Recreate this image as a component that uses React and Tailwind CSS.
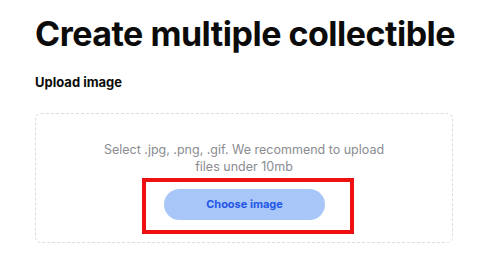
export default function App() {
  return (
    <div className="w-[481px] h-[259px] bg-white overflow-hidden px-[35px] pt-[14px]" style={{ fontFamily: "Inter, 'Noto Sans', sans-serif" }}>
      <h1 className="text-[34px] leading-[40px] font-bold text-[#0b0b0b] tracking-[-0.5px] whitespace-nowrap">Create multiple collectible</h1>
      <div className="mt-[20px] text-[13px] leading-[16px] font-bold text-[#0b0b0b]">Upload image</div>
      <div className="mt-[23px] h-[130px] w-[418px] border border-dashed border-[#dcdcdc] rounded-[6px] flex flex-col items-center pt-[27px]">
        <p className="text-[12.5px] leading-[17px] text-[#8a8c91] text-center w-[300px]">
          Select .jpg, .png, .gif. We recommend to upload<br />files under 10mb
        </p>
        <div className="mt-[3px] ml-[8px] border-4 border-[#ee1111] pl-[18px] pr-[25px] pt-[7px] pb-[10px]">
          <button className="w-[161px] h-[31px] rounded-full bg-[#a8c6f8] text-[#2356e8] text-[11px] font-bold">Choose image</button>
        </div>
      </div>
    </div>
  );
}
